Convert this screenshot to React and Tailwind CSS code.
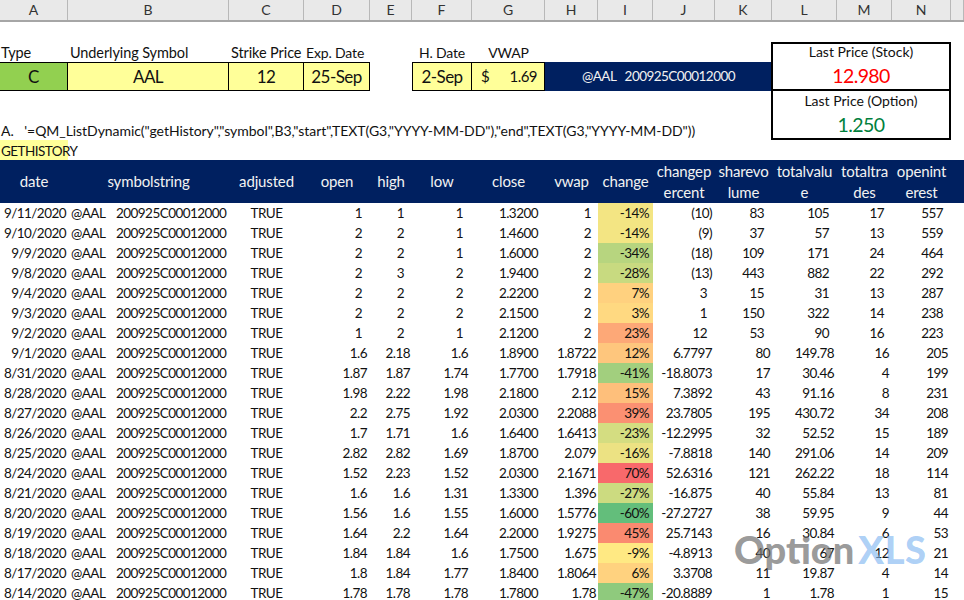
const GRID = "grid grid-cols-[68px_161px_75px_66px_42px_60px_73px_53px_55px_62px_57px_65px_55px_59px_13px]";

const COLUMNS = ["A", "B", "C", "D", "E", "F", "G", "H", "I", "J", "K", "L", "M", "N", ""];

const HEADERS = [
  ["date"],
  ["symbolstring"],
  ["adjusted"],
  ["open"],
  ["high"],
  ["low"],
  ["close"],
  ["vwap"],
  ["change"],
  ["changep", "ercent"],
  ["sharevo", "lume"],
  ["totalvalu", "e"],
  ["totaltra", "des"],
  ["openint", "erest"],
];

const ROWS = [
  ["9/11/2020", "1", "1", "1", "1.3200", "1", "-14%", "bg-[#f3e583]", "(10)", "83", "105", "17", "557"],
  ["9/10/2020", "2", "2", "1", "1.4600", "2", "-14%", "bg-[#f3e583]", "(9)", "37", "57", "13", "559"],
  ["9/9/2020", "2", "2", "1", "1.6000", "2", "-34%", "bg-[#b7d57f]", "(18)", "109", "171", "24", "464"],
  ["9/8/2020", "2", "3", "2", "1.9400", "2", "-28%", "bg-[#c8da80]", "(13)", "443", "882", "22", "292"],
  ["9/4/2020", "2", "2", "2", "2.2200", "2", "7%", "bg-[#ffd17f]", "3", "15", "31", "13", "287"],
  ["9/3/2020", "2", "2", "2", "2.1500", "2", "3%", "bg-[#ffd981]", "1", "150", "322", "14", "238"],
  ["9/2/2020", "1", "2", "1", "2.1200", "2", "23%", "bg-[#fda877]", "12", "53", "90", "16", "223"],
  ["9/1/2020", "1.6", "2.18", "1.6", "1.8900", "1.8722", "12%", "bg-[#fec67d]", "6.7797", "80", "149.78", "16", "205"],
  ["8/31/2020", "1.87", "1.87", "1.74", "1.7700", "1.7918", "-41%", "bg-[#a2cf7e]", "-18.8073", "17", "30.46", "4", "199"],
  ["8/28/2020", "1.98", "2.22", "1.98", "2.1800", "2.12", "15%", "bg-[#febf7b]", "7.3892", "43", "91.16", "8", "231"],
  ["8/27/2020", "2.2", "2.75", "1.92", "2.0300", "2.2088", "39%", "bg-[#fb9072]", "23.7805", "195", "430.72", "34", "208"],
  ["8/26/2020", "1.7", "1.71", "1.6", "1.6400", "1.6413", "-23%", "bg-[#d4dd81]", "-12.2995", "32", "52.52", "15", "189"],
  ["8/25/2020", "2.82", "2.82", "1.69", "1.8700", "2.079", "-16%", "bg-[#ece283]", "-7.8818", "140", "291.06", "14", "209"],
  ["8/24/2020", "1.52", "2.23", "1.52", "2.0300", "2.1671", "70%", "bg-[#f8696b]", "52.6316", "121", "262.22", "18", "114"],
  ["8/21/2020", "1.6", "1.6", "1.31", "1.3300", "1.396", "-27%", "bg-[#ccdb80]", "-16.875", "40", "55.84", "13", "81"],
  ["8/20/2020", "1.56", "1.6", "1.55", "1.6000", "1.5776", "-60%", "bg-[#63be7b]", "-27.2727", "38", "59.95", "9", "44"],
  ["8/19/2020", "1.64", "2.2", "1.64", "2.2000", "1.9275", "45%", "bg-[#fa8a70]", "25.7143", "16", "30.84", "6", "53"],
  ["8/18/2020", "1.84", "1.84", "1.6", "1.7500", "1.675", "-9%", "bg-[#ffe983]", "-4.8913", "40", "67", "12", "21"],
  ["8/17/2020", "1.8", "1.84", "1.77", "1.8400", "1.8064", "6%", "bg-[#ffd27f]", "3.3708", "11", "19.87", "4", "14"],
  ["8/14/2020", "1.78", "1.78", "1.78", "1.7800", "1.78", "-47%", "bg-[#8fca7d]", "-20.8889", "1", "1.78", "1", "15"],
];

const FORMULA = `A.   '=QM_ListDynamic("getHistory","symbol",B3,"start",TEXT(G3,"YYYY-MM-DD"),"end",TEXT(G3,"YYYY-MM-DD"))`;

const LABEL = "row-start-2 whitespace-nowrap pt-px leading-5";

// the first seven rows use a number format that leaves room for a closing paren
function Num({ value, wide, narrow, first }) {
  return <div className={`text-right ${first ? wide : narrow}`}>{value}</div>;
}

function DataRow({ row, first }) {
  const [date, open, high, low, close, vwap, change, color, pct, vol, total, trades, oi] = row;
  return (
    <div className={`${GRID} h-5 items-center leading-5 text-[#111]`}>
      <div className="text-right pr-[2px]">{date}</div>
      <div className="flex pl-[3px]">
        <span className="w-[45px]">@AAL</span>
        <span>200925C00012000</span>
      </div>
      <div className="text-center">TRUE</div>
      <Num value={open} first={first} wide="pr-[8px]" narrow="pr-[3px]" />
      <Num value={high} first={first} wide="pr-[8px]" narrow="pr-[2px]" />
      <Num value={low} first={first} wide="pr-[9px]" narrow="pr-[4px]" />
      <div className="text-right pr-[7px]">{close}</div>
      <Num value={vwap} first={first} wide="pr-[7px]" narrow="pr-[2px]" />
      <div className={`h-5 text-right pr-[4px] ${color}`}>{change}</div>
      <div className={`text-right ${pct.startsWith("(") || first === false ? "pr-[3px]" : "pr-[8px]"}`}>{pct}</div>
      <Num value={vol} first={first} wide="pr-[8px]" narrow="pr-[2px]" />
      <Num value={total} first={first} wide="pr-[8px]" narrow="pr-[3px]" />
      <Num value={trades} first={first} wide="pr-[8px]" narrow="pr-[3px]" />
      <Num value={oi} first={first} wide="pr-[8px]" narrow="pr-[3px]" />
    </div>
  );
}

export default function App() {
  return (
    <div className="relative h-[600px] w-[964px] overflow-hidden bg-white font-['Lato',sans-serif] text-[13.5px] tracking-[-0.55px] text-[#111]">
      <div className={`${GRID} h-[22px] border-b-2 border-[#a6a6a6] bg-[#e9e9e9] text-[14px] tracking-normal text-[#333]`}>
        {COLUMNS.map((c, i) => (
          <div key={i} className="flex items-center justify-center border-r border-[#b8b8b8] leading-none">
            {c}
          </div>
        ))}
      </div>

      <div className={`${GRID} grid-rows-[20px_20px_29px_30px_19px_20px]`}>
        <div className={`${LABEL} col-start-1 pl-px text-[14.5px] tracking-[-0.1px]`}>Type</div>
        <div className={`${LABEL} col-start-2 pl-[2px] text-[14.5px] tracking-[-0.1px]`}>Underlying Symbol</div>
        <div className={`${LABEL} col-start-3 pl-[2px] text-[14.5px] tracking-[-0.1px]`}>Strike Price</div>
        <div className={`${LABEL} col-start-4 pl-[2px] text-[14px] tracking-[-0.15px]`}>Exp. Date</div>
        <div className={`${LABEL} col-start-6 text-center text-[14px] tracking-[-0.15px]`}>H. Date</div>
        <div className={`${LABEL} col-start-7 text-center text-[14px] tracking-[-0.15px]`}>VWAP</div>

        <div className="col-start-1 row-start-3 flex items-center justify-center border-y border-r border-black bg-[#92d050] text-[17px]">C</div>
        <div className="col-start-2 row-start-3 flex items-center justify-center border-y border-r border-black bg-[#ffff99] text-[17px]">AAL</div>
        <div className="col-start-3 row-start-3 flex items-center justify-center border-y border-r border-black bg-[#ffff99] text-[17px]">12</div>
        <div className="col-start-4 row-start-3 flex items-center justify-center border-y border-r border-black bg-[#ffff99] text-[17px]">25-Sep</div>
        <div className="col-start-6 row-start-3 flex items-center justify-center border border-black bg-[#ffff99] text-[17px]">2-Sep</div>
        <div className="col-start-7 row-start-3 flex items-center justify-between border-y border-r border-black bg-[#ffff99] pl-[9px] pr-[7px] text-[15px]">
          <span>$</span>
          <span>1.69</span>
        </div>
        <div className="col-span-4 col-start-8 row-start-3 flex items-center justify-center whitespace-pre bg-[#002060] text-[#f2f2f2]">
          @AAL   200925C00012000
        </div>

        <div className="col-span-3 col-start-12 row-span-2 row-start-2 -ml-px flex flex-col items-center border-2 border-black text-[14px] tracking-normal">
          <div className="-mt-[2px] leading-5">Last Price (Stock)</div>
          <div className="text-[19.5px] leading-7 tracking-[-0.6px] text-[#ff0000]">12.980</div>
        </div>
        <div className="col-span-3 col-start-12 row-span-2 row-start-4 -ml-px flex flex-col items-center border-2 border-t-0 border-black text-[14px] tracking-normal">
          <div className="leading-5">Last Price (Option)</div>
          <div className="text-[19.5px] leading-7 tracking-[-0.6px] text-[#00803c]">1.250</div>
        </div>

        <div className="col-span-11 col-start-1 row-start-5 self-center whitespace-pre pl-px text-[14px] leading-5 tracking-[-0.05px]">{FORMULA}</div>
        <div className="col-start-1 row-start-6 whitespace-nowrap bg-[#ffff99] pl-px pt-px leading-5">GETHISTORY</div>
      </div>

      <div className={`${GRID} h-[43px] bg-[#002060] text-[15px] tracking-[-0.15px] text-[#f2f2f2]`}>
        {HEADERS.map((lines) => (
          <div key={lines[0]} className="flex flex-col items-center justify-center whitespace-nowrap leading-[21px]">
            {lines.map((l) => (
              <span key={l}>{l}</span>
            ))}
          </div>
        ))}
      </div>

      {ROWS.map((row, i) => (
        <DataRow key={row[0]} row={row} first={i < 7} />
      ))}

      <div className="absolute left-[734px] top-[524px] flex text-[38px] font-black leading-[50px] tracking-normal">
        <span className="text-[#6e6e6e]/70">Option</span>
        <span className="ml-[4px] tracking-[0.5px] text-[#7fb6f2]/65">XLS</span>
      </div>
    </div>
  );
}
